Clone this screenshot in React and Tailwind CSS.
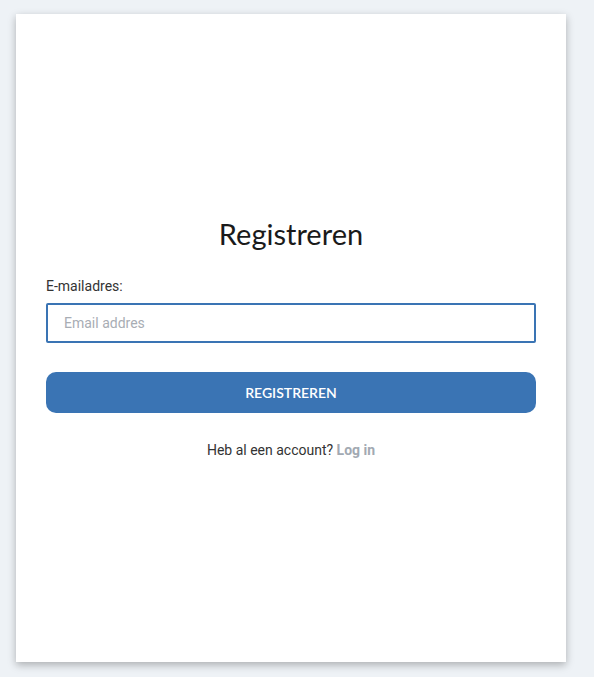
export default function App() {
  return (
    <div className="min-h-screen bg-[#eef2f6] pt-[14px] pl-[16px]" style={{ fontFamily: 'Roboto, "Liberation Sans", sans-serif' }}>
      <div className="w-[550px] h-[648px] bg-white shadow-[0_3px_8px_rgba(0,0,0,0.28)] flex flex-col justify-center px-[30px] pt-[2px]">
        <h1 className="text-center text-[29px] leading-[34px] text-[#1a1a1a] mb-[27px]" style={{ fontFamily: 'Lato, sans-serif' }}>
          Registreren
        </h1>
        <label className="text-[14px] leading-[16px] text-[#333] mb-[9px]">E-mailadres:</label>
        <input
          type="email"
          placeholder="Email addres"
          className="h-[40px] border-2 border-[#3a74b4] rounded-[2px] px-[16px] text-[14px] outline-none placeholder:text-[#a8adb4]"
        />
        <button className="mt-[29px] h-[41px] bg-[#3a74b4] text-white text-[14px] font-semibold rounded-[10px]" style={{ fontFamily: 'Lato, sans-serif' }}>
          REGISTREREN
        </button>
        <p className="mt-[27px] text-center text-[14px] text-[#333]">
          Heb al een account? <a className="font-bold text-[#a2a9b2]">Log in</a>
        </p>
      </div>
    </div>
  );
}
